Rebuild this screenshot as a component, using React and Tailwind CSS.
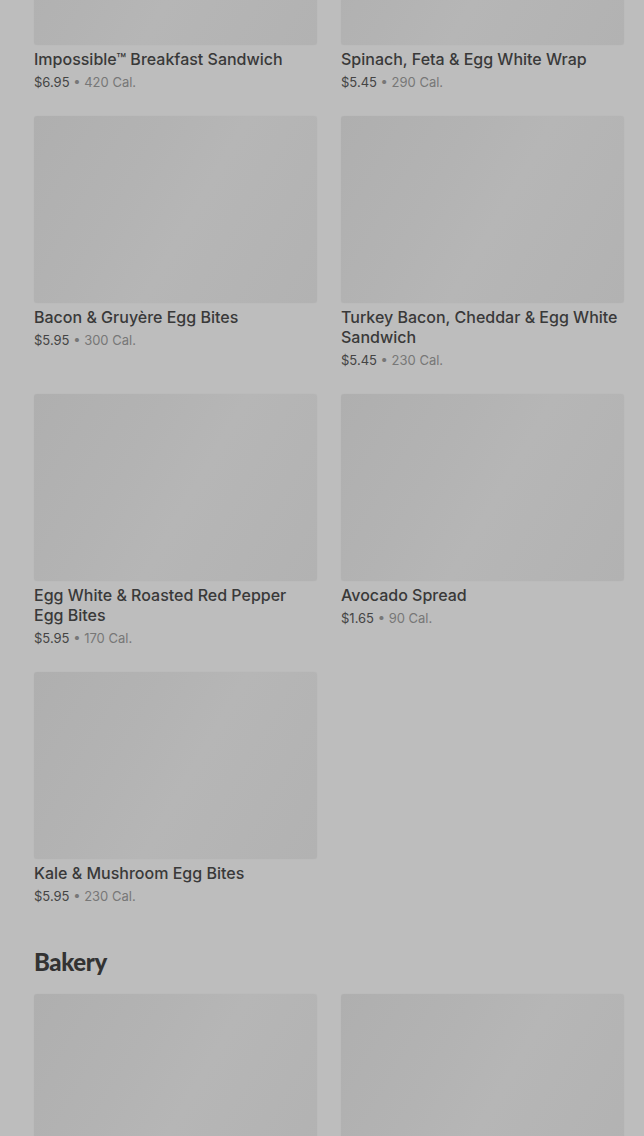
const breakfast = [
  { name: 'Impossible™ Breakfast Sandwich', price: '$6.95', cal: '420 Cal.' },
  { name: 'Spinach, Feta & Egg White Wrap', price: '$5.45', cal: '290 Cal.' },
  { name: 'Bacon & Gruyère Egg Bites', price: '$5.95', cal: '300 Cal.' },
  { name: 'Turkey Bacon, Cheddar & Egg White Sandwich', price: '$5.45', cal: '230 Cal.' },
  { name: 'Egg White & Roasted Red Pepper Egg Bites', price: '$5.95', cal: '170 Cal.' },
  { name: 'Avocado Spread', price: '$1.65', cal: '90 Cal.' },
  { name: 'Kale & Mushroom Egg Bites', price: '$5.95', cal: '230 Cal.' }
];

const bakery = [
  { name: 'Butter Croissant', price: '$3.25', cal: '260 Cal.' },
  { name: 'Chocolate Croissant', price: '$3.75', cal: '300 Cal.' }
];

function ItemCard({ item }) {
  return (
    <div className="flex flex-col pb-[1px]">
      <div className="h-[187px] w-full rounded-[3px] bg-[linear-gradient(120deg,#afafaf_0%,#b3b3b3_35%,#b6b6b6_55%,#b2b2b2_100%)] shadow-[0_0_1px_rgba(0,0,0,0.08)]" />
      <p className="mt-1 text-[16px] font-medium leading-5 text-[#393939]">{item.name}</p>
      <p className="mt-[4px] text-[13px] leading-[18px]">
        <span className="text-[#444]">{item.price}</span>
        <span className="text-[#777]"> • {item.cal}</span>
      </p>
    </div>
  );
}

export default function App() {
  return (
    <div className="h-[1136px] overflow-hidden bg-[#bdbdbd] font-['Inter','Liberation_Sans',sans-serif]">
      <div className="pl-[34px] pr-[20px]">
        <div className="-mt-[142px] grid grid-cols-2 gap-x-6 gap-y-6">
          {breakfast.map((item) => (
            <ItemCard key={item.name} item={item} />
          ))}
        </div>
        <h2 className="mt-[42px] font-['Lato','Liberation_Sans',sans-serif] text-[24px] font-black leading-7 tracking-[-0.4px] text-[#333]">
          Bakery
        </h2>
        <div className="mt-[18px] grid grid-cols-2 gap-x-6 gap-y-6">
          {bakery.map((item) => (
            <ItemCard key={item.name} item={item} />
          ))}
        </div>
      </div>
    </div>
  );
}
